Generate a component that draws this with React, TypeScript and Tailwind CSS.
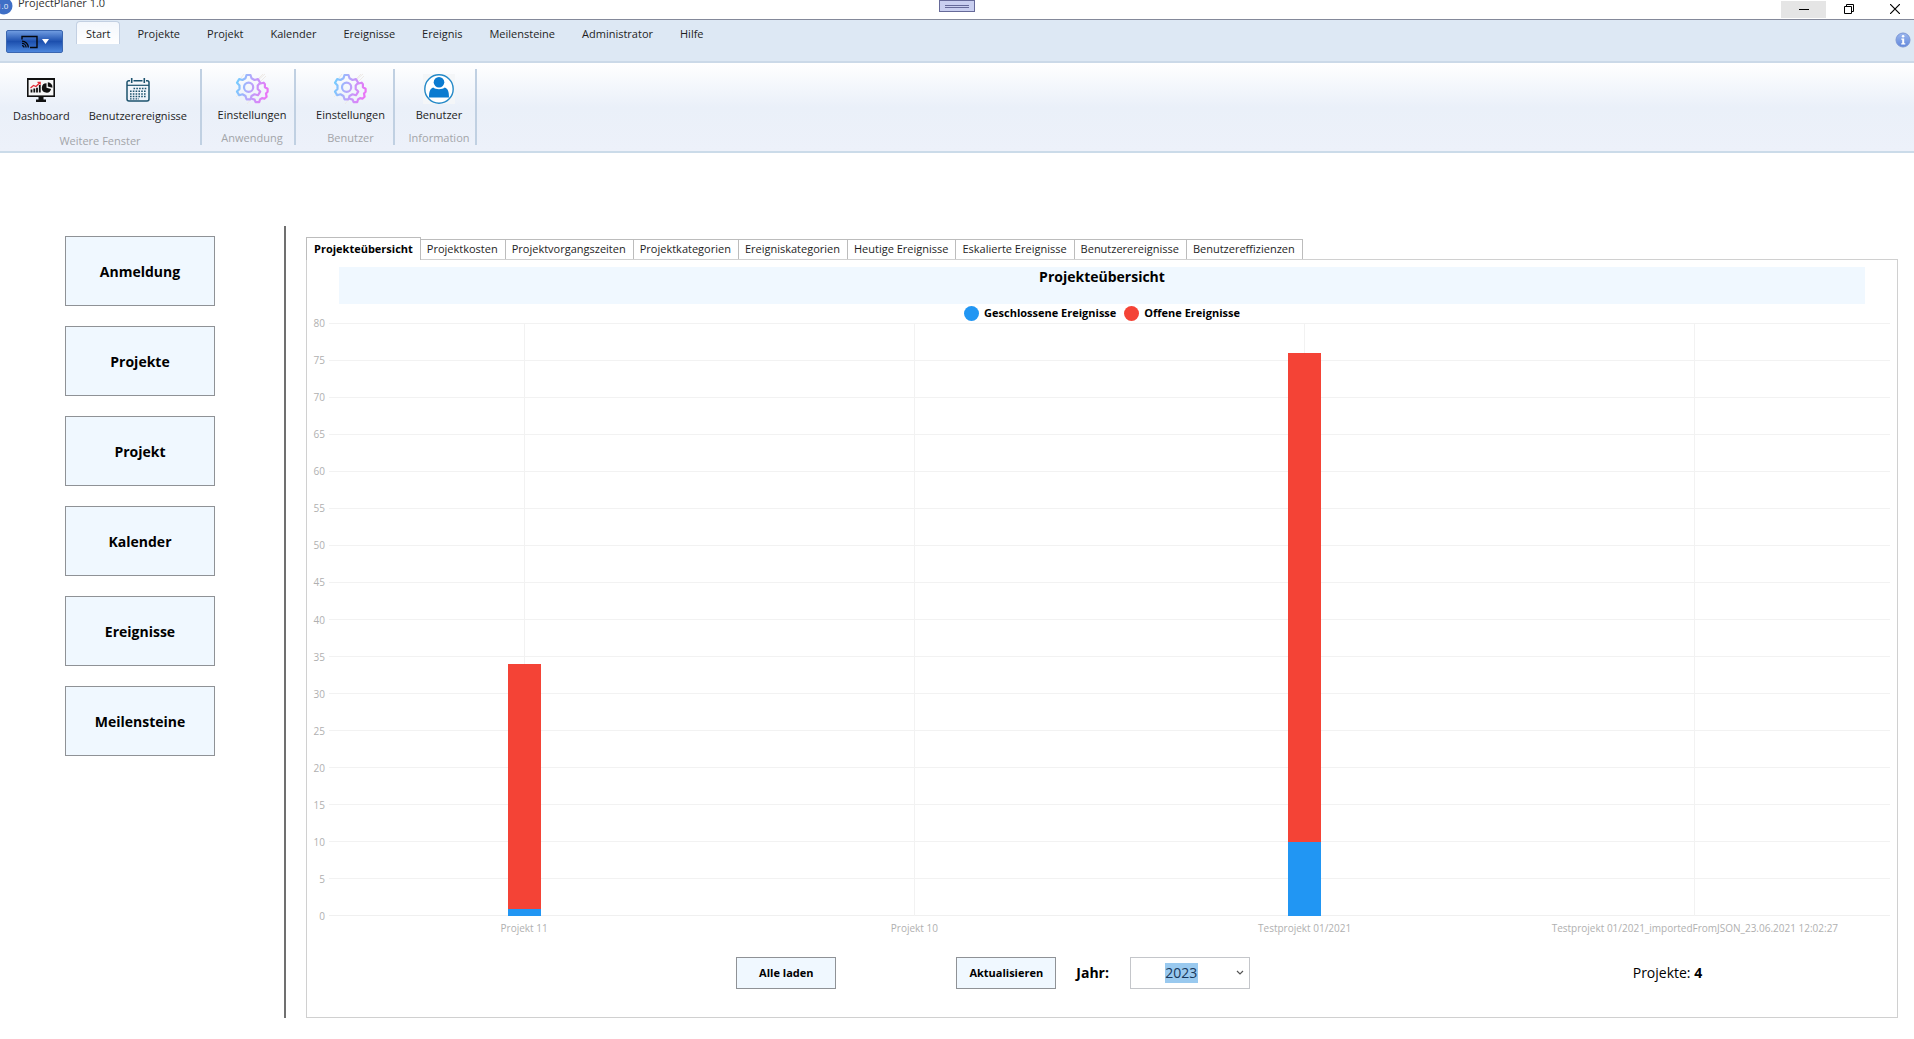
import { useState } from "react";
import type { ReactNode } from "react";

const ribbonTabs = [
  "Start",
  "Projekte",
  "Projekt",
  "Kalender",
  "Ereignisse",
  "Ereignis",
  "Meilensteine",
  "Administrator",
  "Hilfe",
];

const sideButtons = ["Anmeldung", "Projekte", "Projekt", "Kalender", "Ereignisse", "Meilensteine"];

const chartTabs = [
  "Projekteübersicht",
  "Projektkosten",
  "Projektvorgangszeiten",
  "Projektkategorien",
  "Ereigniskategorien",
  "Heutige Ereignisse",
  "Eskalierte Ereignisse",
  "Benutzerereignisse",
  "Benutzereffizienzen",
];

const projects = [
  { name: "Projekt 11", closed: 1, open: 33 },
  { name: "Projekt 10", closed: 0, open: 0 },
  { name: "Testprojekt 01/2021", closed: 10, open: 66 },
  { name: "Testprojekt 01/2021_importedFromJSON_23.06.2021 12:02:27", closed: 0, open: 0 },
];

const MAX_VALUE = 80;
const ticks = [80, 75, 70, 65, 60, 55, 50, 45, 40, 35, 30, 25, 20, 15, 10, 5, 0];

function LogoIcon() {
  return (
    <svg width="13" height="15" viewBox="0 0 13 15" aria-hidden="true">
      <circle cx="4" cy="6" r="8.5" fill="#3f6fc6" />
      <text x="-3" y="9" fontSize="8" fill="#e8effc">
        1.0
      </text>
    </svg>
  );
}

function CastIcon() {
  return (
    <svg width="17" height="14" viewBox="0 0 17 14" fill="none" stroke="#05070c" aria-hidden="true">
      <path d="M1 4.5V1.5h15v11H9" strokeWidth="1.4" />
      <path d="M1 6.2a6.3 6.3 0 0 1 6.3 6.3M1 8.4a4.1 4.1 0 0 1 4.1 4.1M1 10.6a2 2 0 0 1 2 2" strokeWidth="1.3" />
    </svg>
  );
}

function DashboardIcon() {
  return (
    <svg width="28" height="24" viewBox="0 0 28 24" fill="none" aria-hidden="true">
      <rect x="0.8" y="0.8" width="26.4" height="17.4" fill="#f7f7f7" stroke="#111" strokeWidth="1.6" />
      <path d="M0 .8h28" stroke="#111" strokeWidth="2.4" />
      <path d="M11.5 18h5v3.5h2.5V24H9v-2.5h2.5z" fill="#111" />
      <path d="M4.5 14.5v-3M7.3 14.5v-4M10 14.5V9.8M12.8 14.5V7" stroke="#111" strokeWidth="1.8" />
      <path d="M3.5 10l3-2.5 2.5 1 4-4M10.5 4.3h2.7v2.5" stroke="#e22b35" strokeWidth="1.2" />
      <path d="M19.5 5.2a4.7 4.7 0 1 0 4.6 5.8l-4.6-1.2z" fill="#111" />
      <path d="M20.8 4.3v4.3l4.6 1.2a4.8 4.8 0 0 0-4.6-5.5z" fill="#111" />
    </svg>
  );
}

function CalendarIcon() {
  return (
    <svg width="24" height="24" viewBox="0 0 24 24" fill="none" stroke="#1d536e" aria-hidden="true">
      <path d="M4 2.8H2.8A1.8 1.8 0 0 0 1 4.6V21a2 2 0 0 0 2 2h18a2 2 0 0 0 2-2V4.6a1.8 1.8 0 0 0-1.8-1.8H20M7.5 2.8h9" strokeWidth="1.5" />
      <path d="M5.7 0v5M18.3 0v5" strokeWidth="1.6" />
      <path d="M1 7.3h22" strokeWidth="1.2" />
      <path d="M7.5 10.5h13M4 13.2h16.5M4 15.9h16.5M4 18.6h16.5" strokeWidth="1.5" strokeDasharray="1.6 1.2" />
      <path d="M4 20.8h9" strokeWidth="1.2" strokeDasharray="1.6 1.2" />
    </svg>
  );
}

function GearsIcon({ id }: { id: string }) {
  return (
    <svg width="34" height="32" viewBox="0 0 34 32" fill="none" aria-hidden="true">
      <defs>
        <linearGradient id={id} x1="0" y1="10" x2="34" y2="18" gradientUnits="userSpaceOnUse">
          <stop offset="0" stopColor="#6fd0ff" />
          <stop offset="0.45" stopColor="#b7a6fb" />
          <stop offset="1" stopColor="#ee72f6" />
        </linearGradient>
      </defs>
      <path d="M6 5l3-4M16 26l-4 5M22 8l8-7M1 24l4-4M26 8l5-5M24 5l4-4" stroke="#eeeae6" />
      <g stroke={`url(#${id})`} strokeWidth="2.2" strokeLinejoin="round" strokeLinecap="round">
        <path d="M11.5 2h4l1 3.3 3 1.7 3.5-.9 2.2 3.7-2.5 2.6v3.6l2.5 2.6-2.2 3.6-3.5-.9-3 1.7-1 3.3h-4l-1-3.3-3-1.7-3.3.9L2 18.6 4.5 16v-3.6L2 9.8l2.2-3.7 3.3.9 3-1.7z" />
        <circle cx="13.6" cy="14.3" r="4.6" />
        <path d="M25.5 10.5l3.2-.8 1.2 1.4v3.2l2.7 1.5v3l-1.6 1.7.6 3.2-2.2 2-2.4-.5-2 1.3-.8 2.7h-3.6l-1-2.6-2.8-.9" />
      </g>
    </svg>
  );
}

function UserIcon() {
  return (
    <svg width="32" height="30" viewBox="0 0 32 30" fill="none" aria-hidden="true">
      <rect width="32" height="30" fill="#f4f6f8" />
      <circle cx="16" cy="15" r="14.2" fill="#fff" stroke="#2489c8" strokeWidth="1.4" />
      <circle cx="16" cy="8.3" r="5.3" fill="#0b7bd0" />
      <path d="M10.3 13.5c2 2.2 9.4 2.2 11.4 0 3.3 1 4.3 4 4.3 10H6c0-6 1-9 4.3-10z" fill="#0b7bd0" />
    </svg>
  );
}

function InfoIcon() {
  return (
    <svg width="16" height="16" viewBox="0 0 16 16" aria-hidden="true">
      <defs>
        <linearGradient id="info" x1="0" y1="0" x2="0" y2="1">
          <stop offset="0" stopColor="#9db8ee" />
          <stop offset="1" stopColor="#5f86dc" />
        </linearGradient>
      </defs>
      <circle cx="8" cy="8" r="7" fill="url(#info)" stroke="#7c97d6" />
      <path d="M6.3 6.5h2.9v4.7h1.1v1.3H6.2v-1.3h1V7.8h-.9z" fill="#fff" />
      <circle cx="8.1" cy="4.3" r="1.3" fill="#fff" />
    </svg>
  );
}

function TitleBar() {
  return (
    <div className="relative flex h-[19px] items-start justify-between overflow-hidden bg-white">
      <div className="flex items-start gap-[5px] text-[11px] leading-[6px] text-[#333]">
        <LogoIcon />
        <span>ProjectPlaner 1.0</span>
      </div>
      <div className="absolute left-1/2 top-0 flex h-3 w-9 -translate-x-1/2 flex-col items-center justify-center gap-px border border-[#666a99] bg-[#c9cff0]">
        <span className="h-px w-6 bg-[#666a99]" />
        <span className="h-px w-6 bg-[#666a99]" />
      </div>
      <div className="-mr-1 flex text-black">
        <button type="button" aria-label="Minimieren" className="mt-px flex h-[17px] w-[45px] items-center justify-center bg-[#e5e5e5]">
          <svg width="10" height="10" viewBox="0 0 10 10" stroke="currentColor" aria-hidden="true">
            <path d="M0 4.5h10" />
          </svg>
        </button>
        <button type="button" aria-label="Verkleinern" className="flex h-[17px] w-[46px] items-center justify-center">
          <svg width="10" height="10" viewBox="0 0 10 10" fill="none" stroke="currentColor" aria-hidden="true">
            <path d="M.5 2.5h7v7h-7zM2.5 2.5v-2h7v7h-2" />
          </svg>
        </button>
        <button type="button" aria-label="Schließen" className="flex h-[17px] w-[46px] items-center justify-center">
          <svg width="10" height="10" viewBox="0 0 10 10" stroke="currentColor" aria-hidden="true">
            <path d="M0 0l10 10M10 0L0 10" strokeWidth="1.2" />
          </svg>
        </button>
      </div>
    </div>
  );
}

function RibbonTabs() {
  return (
    <div className="flex h-11 items-start border-b-2 border-t border-b-[#cbd9e8] border-t-[#84899a] bg-[#dde8f4]">
      <button
        type="button"
        aria-label="Anwendungsmenü"
        className="ml-[6px] mt-[10px] flex h-[23px] w-[57px] shrink-0 items-center justify-center gap-1 rounded-xs border border-[#3a66b0] bg-linear-to-b from-[#6f9be0] via-[#1c4fae] to-[#4c86dc]"
      >
        <CastIcon />
        <svg width="7" height="5" viewBox="0 0 7 5" aria-hidden="true">
          <path d="M0 0h7L3.5 5z" fill="#fff" />
        </svg>
      </button>
      <nav className="ml-[13px] flex gap-[7px] pt-px text-[11px] leading-4">
        {ribbonTabs.map((tab, index) => (
          <button
            key={tab}
            type="button"
            className={
              index === 0
                ? "h-[23px] rounded-t-sm border border-b-0 border-[#c3d0e2] bg-linear-to-b from-[#f3f7fc] to-white px-[9px] pt-px"
                : "h-[23px] px-[10px] pt-[2px]"
            }
          >
            {tab}
          </button>
        ))}
      </nav>
      <button type="button" aria-label="Info" className="ml-auto mr-[3px] mt-[12px]">
        <InfoIcon />
      </button>
    </div>
  );
}

function RibbonButton({ label, children }: { label: string; children: ReactNode }) {
  return (
    <button type="button" className="flex flex-col items-center gap-[2px] pt-1 text-[11px] leading-4">
      <span className="flex h-8 items-center justify-center">{children}</span>
      {label}
    </button>
  );
}

function RibbonGroup({ caption, className, children }: { caption: string; className: string; children: ReactNode }) {
  return (
    <div className={`flex h-[76px] flex-col items-center justify-between border-r-2 border-[#c0d0e2] ${className}`}>
      <div className="flex gap-[19px]">{children}</div>
      <span className="text-[11px] leading-[8px] text-[#a3a5a9]">{caption}</span>
    </div>
  );
}

function Ribbon() {
  return (
    <div className="flex h-[90px] border-b-2 border-[#cbdbe9] bg-linear-to-b from-white via-[#eaf0f9] to-[#edf1fa] pt-[6px]">
      <RibbonGroup caption="Weitere Fenster" className="w-[202px] pt-px">
        <RibbonButton label="Dashboard">
          <DashboardIcon />
        </RibbonButton>
        <RibbonButton label="Benutzerereignisse">
          <CalendarIcon />
        </RibbonButton>
      </RibbonGroup>
      <RibbonGroup caption="Anwendung" className="w-[94px] pb-[3px] pl-2">
        <RibbonButton label="Einstellungen">
          <GearsIcon id="gears-app" />
        </RibbonButton>
      </RibbonGroup>
      <RibbonGroup caption="Benutzer" className="w-[99px] pb-[3px] pl-3">
        <RibbonButton label="Einstellungen">
          <GearsIcon id="gears-user" />
        </RibbonButton>
      </RibbonGroup>
      <RibbonGroup caption="Information" className="w-[82px] pb-[3px] pl-2">
        <RibbonButton label="Benutzer">
          <UserIcon />
        </RibbonButton>
      </RibbonGroup>
    </div>
  );
}

function Legend() {
  return (
    <div className="flex h-[19px] items-center justify-center gap-2 text-[11px] font-bold text-black">
      <span className="flex items-center gap-[5px]">
        <span className="size-[15px] rounded-full bg-[#2196f3]" />
        Geschlossene Ereignisse
      </span>
      <span className="flex items-center gap-[5px]">
        <span className="size-[15px] rounded-full bg-[#f44336]" />
        Offene Ereignisse
      </span>
    </div>
  );
}

function StackedChart() {
  return (
    <div className="flex flex-1 flex-col pr-[7px] text-[10px] text-[#b0b0b0]">
      <div className="flex flex-1">
        <div className="-my-[5px] flex w-[18px] flex-col justify-between text-right leading-[10px]">
          {ticks.map((tick) => (
            <span key={tick}>{tick}</span>
          ))}
        </div>
        <div className="ml-1 grid flex-1 grid-cols-1 grid-rows-1">
          <div className="col-start-1 row-start-1 flex flex-col border-b border-[#f0f0f0]">
            {ticks.slice(1).map((tick) => (
              <div key={tick} className="flex-1 border-t border-[#f2f2f2]" />
            ))}
          </div>
          <div className="col-start-1 row-start-1 flex">
            {projects.map((project) => (
              <div
                key={project.name}
                className="flex flex-1 flex-col items-center justify-end bg-[linear-gradient(#f2f2f2,#f2f2f2)] bg-size-[1px_100%] bg-center bg-no-repeat"
              >
                <div className="w-[33px] bg-[#f44336]" style={{ height: `${(project.open / MAX_VALUE) * 100}%` }} />
                <div className="w-[33px] bg-[#2196f3]" style={{ height: `${(project.closed / MAX_VALUE) * 100}%` }} />
              </div>
            ))}
          </div>
        </div>
      </div>
      <div className="ml-[22px] flex h-5 items-end leading-4">
        {projects.map((project) => (
          <span key={project.name} className="flex flex-1 justify-center whitespace-nowrap">
            {project.name}
          </span>
        ))}
      </div>
    </div>
  );
}

function Toolbar() {
  const [year, setYear] = useState("2023");

  return (
    <div className="flex h-[81px] items-start pl-[27%] pr-[12%] pt-[21px] text-black">
      <button type="button" className="h-8 w-[100px] border border-[#8f9296] bg-[#f0f8ff] text-[11px] font-bold">
        Alle laden
      </button>
      <button type="button" className="ml-[120px] h-8 w-[100px] border border-[#8f9296] bg-[#f0f8ff] text-[11px] font-bold">
        Aktualisieren
      </button>
      <label htmlFor="year" className="ml-5 w-[54px] text-[14px] leading-8 font-bold">
        Jahr:
      </label>
      <div className="flex h-8 w-[120px] items-center border border-[#c4c6ca] pl-[34px] pr-[5px]">
        <select
          id="year"
          value={year}
          onChange={(e) => setYear(e.target.value)}
          className="h-5 appearance-none bg-[#99c9ef] text-[14px] leading-5 text-[#17385c] outline-none"
        >
          <option>2023</option>
        </select>
        <svg className="pointer-events-none ml-auto" width="8" height="6" viewBox="0 0 8 6" fill="none" stroke="#555" aria-hidden="true">
          <path d="M1 1l3 3 3-3" strokeWidth="1.2" />
        </svg>
      </div>
      <p className="ml-auto mr-1 text-[14px] leading-8">
        Projekte: <b>4</b>
      </p>
    </div>
  );
}

export default function App() {
  const [activeTab, setActiveTab] = useState(0);

  return (
    <div className="flex min-h-screen flex-col bg-white font-['Open_Sans','Noto_Sans',sans-serif] text-[#1e1e1e]">
      <TitleBar />
      <RibbonTabs />
      <Ribbon />
      <div className="flex flex-1 pb-[21px] pr-4 pt-[73px]">
        <nav className="ml-[65px] flex w-[150px] shrink-0 flex-col gap-5 pt-[10px]">
          {sideButtons.map((label) => (
            <button key={label} type="button" className="h-[70px] border border-[#8f9296] bg-[#f0f8ff] text-[14px] font-bold text-black">
              {label}
            </button>
          ))}
        </nav>
        <div className="ml-[69px] w-[2px] bg-[#707070]" />
        <main className="ml-5 flex min-w-0 flex-1 flex-col pt-[11px]">
          <div role="tablist" className="flex items-end text-[11px]">
            {chartTabs.map((tab, index) => (
              <button
                key={tab}
                type="button"
                role="tab"
                aria-selected={index === activeTab}
                onClick={() => setActiveTab(index)}
                className={
                  index === activeTab
                    ? "relative -mb-px h-[23px] border border-b-0 border-[#bcbcbc] bg-white px-[7px] font-bold text-black"
                    : "h-5 border border-b-0 border-l-0 border-[#bcbcbc] pl-[6px] pr-[7px]"
                }
              >
                {tab}
              </button>
            ))}
          </div>
          <section className="flex flex-1 flex-col border border-[#d0d0d0]">
            <h1 className="mx-8 mt-[7px] h-[37px] bg-[#f0f8ff] text-center text-[14px] leading-5 font-bold text-black">
              {chartTabs[activeTab]}
            </h1>
            <Legend />
            <StackedChart />
            <Toolbar />
          </section>
        </main>
      </div>
    </div>
  );
}
